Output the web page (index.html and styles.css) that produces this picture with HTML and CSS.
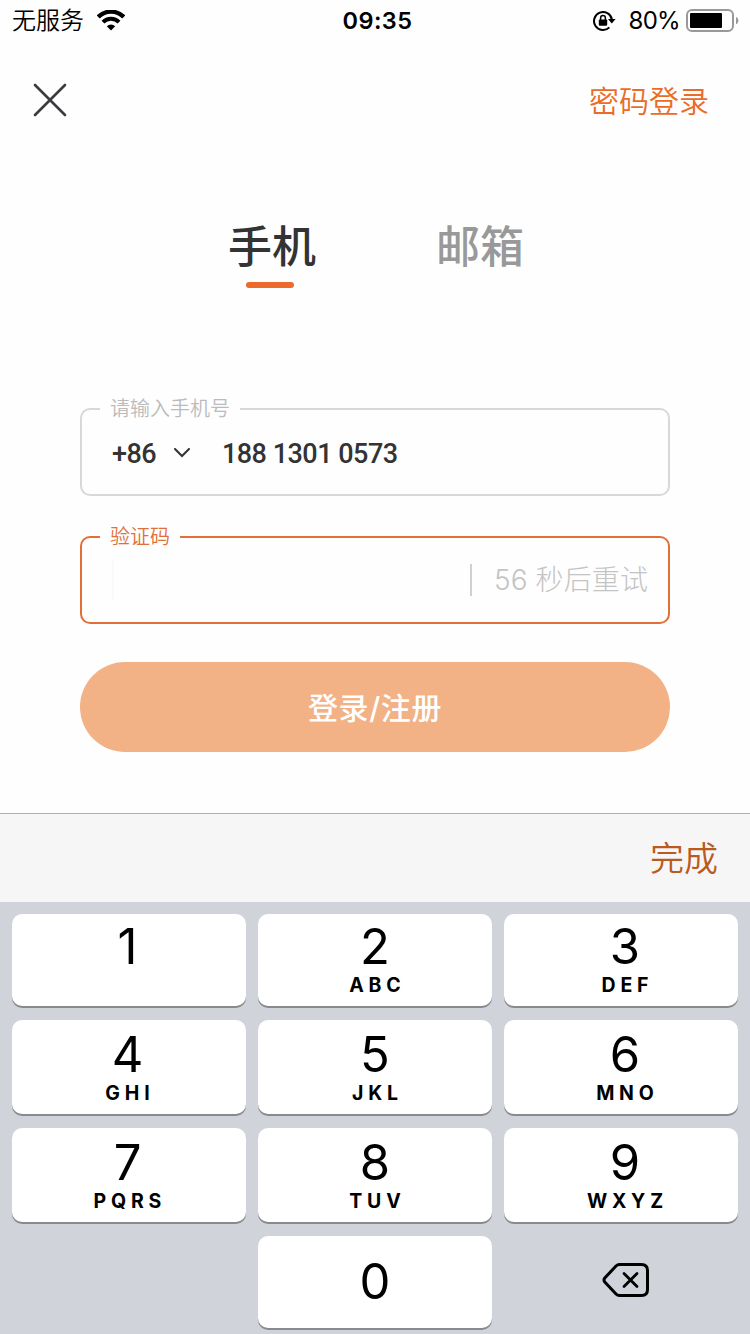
FILE: index.html
```html
<!DOCTYPE html>
<html lang="zh-CN">
<head>
    <meta charset="UTF-8">
    <meta name="viewport" content="width=device-width, initial-scale=1.0">
    <title>登录</title>
    <link rel="stylesheet" href="styles.css">
</head>
<body>

<div class="page">
    <!-- 状态栏 -->
    <header class="status-bar">
        <div class="status-left">
            <span class="carrier">无服务</span>
            <svg class="wifi" width="28" height="21" viewBox="0 0 28 21">
                <path d="M1.2 7A18 18 0 0 1 26.8 7" fill="none" stroke="#000" stroke-width="4.4"/>
                <path d="M6 12.2A11.2 11.2 0 0 1 22 12.2" fill="none" stroke="#000" stroke-width="4"/>
                <path d="M9.8 16.2A6 6 0 0 1 18.2 16.2L14 20.4Z"/>
            </svg>
        </div>
        <div class="status-time">09:35</div>
        <div class="status-right">
            <svg class="lock" width="24" height="22" viewBox="0 0 24 22">
                <path d="M17.4 17.4A9 9 0 1 1 19.9 9.5" fill="none" stroke="#000" stroke-width="2"/>
                <path d="M16 9h7.6l-3.8 4.6z"/>
                <rect x="6.8" y="9.6" width="8.4" height="6.2" rx="1"/>
                <path d="M8.6 10V8a2.4 2.6 0 0 1 4.8 0v2" fill="none" stroke="#000" stroke-width="1.5"/>
            </svg>
            <span class="percent">80%</span>
            <svg class="battery" width="54" height="24" viewBox="0 0 54 24">
                <rect x="1" y="1" width="46" height="21" rx="5" fill="none" stroke="#999" stroke-width="2"/>
                <rect x="4" y="4" width="32" height="15" rx="1"/>
                <path d="M50 8c3.2 1 3.2 6.2 0 7.2z" fill="#999"/>
            </svg>
        </div>
    </header>

    <!-- 导航 -->
    <nav class="nav">
        <button class="close-btn" aria-label="关闭">
            <svg width="34" height="34" viewBox="0 0 34 34">
                <path d="M2 2L32 32M32 2L2 32" stroke="#3c3c40" stroke-width="2.6" stroke-linecap="round"/>
            </svg>
        </button>
        <a class="password-login">密码登录</a>
    </nav>

    <div class="tabs">
        <div class="tab active">手机</div>
        <div class="tab">邮箱</div>
    </div>

    <!-- 登录表单 -->
    <main class="form">
        <fieldset class="field">
            <legend>请输入手机号</legend>
            <div class="field-row">
                <span class="area-code">+86</span>
                <svg class="arrow" width="18" height="12" viewBox="0 0 18 12">
                    <path d="M2 1l7 7 7-7" fill="none" stroke="#333" stroke-width="2" stroke-linecap="round"/>
                </svg>
                <span class="phone">188 1301 0573</span>
            </div>
        </fieldset>
        <fieldset class="field focused">
            <legend>验证码</legend>
            <div class="field-row code-row">
                <span class="caret"></span>
                <span class="countdown">56 秒后重试</span>
            </div>
        </fieldset>
        <button class="login-btn">登录/注册</button>
    </main>

    <!-- 键盘 -->
    <section class="keyboard">
        <div class="toolbar"><span class="done">完成</span></div>
        <div class="keys">
            <div class="key left"><b>1</b></div>
            <div class="key"><b>2</b><small>ABC</small></div>
            <div class="key right"><b>3</b><small>DEF</small></div>
            <div class="key low left"><b>4</b><small>GHI</small></div>
            <div class="key low"><b>5</b><small>JKL</small></div>
            <div class="key low right"><b>6</b><small>MNO</small></div>
            <div class="key low left"><b>7</b><small>PQRS</small></div>
            <div class="key low"><b>8</b><small>TUV</small></div>
            <div class="key low right"><b>9</b><small>WXYZ</small></div>
            <div class="key blank"></div>
            <div class="key zero"><b>0</b></div>
            <div class="key blank">
                <svg class="delete" width="48" height="36" viewBox="0 0 48 36">
                    <path d="M17.5 2.5H39.5Q45.5 2.5 45.5 8.5V27.5Q45.5 33.5 39.5 33.5H17.5Q15.5 33.5 14 32L2.8 20Q1.2 18 2.8 16L14 4Q15.5 2.5 17.5 2.5Z" fill="none" stroke="#000" stroke-width="3"/>
                    <path d="M22 11.5l13 13M35 11.5l-13 13" stroke="#000" stroke-width="2.8" stroke-linecap="round"/>
                </svg>
            </div>
        </div>
    </section>
</div>

</body>
</html>
```
FILE: styles.css
```css
* {
    box-sizing: border-box;
}
body {
    margin: 0;
    background-color: #fefefe;
    font-family: Inter, 'Noto Sans CJK SC', sans-serif;
    color: #000;
}
button {
    border: none;
    background: none;
    padding: 0;
    font-family: inherit;
}
.page {
    display: flex;
    flex-direction: column;
    width: 750px;
    height: 1334px;
    overflow: hidden;
}
.status-bar {
    display: grid;
    grid-template-columns: 1fr auto 1fr;
    align-items: center;
    height: 40px;
    padding: 0 10px 0 12px;
    font-size: 24px;
    line-height: 40px;
}
.status-left, .status-right {
    display: flex;
    align-items: center;
}
.status-left {
    gap: 13px;
}
.status-right {
    justify-content: flex-end;
}
.carrier {
    font-weight: 350;
    padding-top: 1px;
}
.status-time {
    padding: 1px 0 0 3px;
    font-size: 23.5px;
    font-weight: 600;
    letter-spacing: 0.4px;
}
.percent {
    margin: 1px 6px 0 13px;
    letter-spacing: -0.7px;
}
.nav {
    display: flex;
    justify-content: space-between;
    align-items: center;
    height: 120px;
    padding: 0 41px 0 33px;
}
.close-btn svg {
    display: block;
}
.password-login {
    padding-bottom: 2px;
    font-size: 30px;
    font-weight: 350;
    color: #e96c28;
}
.tabs {
    display: flex;
    justify-content: center;
    gap: 120px;
    height: 128px;
    padding: 55px 0 0 2px;
}
.tab {
    font-size: 44px;
    line-height: 64px;
    font-weight: 500;
    color: #999;
}
.tab.active {
    color: #333;
}
.tab.active::after {
    content: '';
    display: block;
    width: 48px;
    height: 6px;
    margin: 3px 0 0 18px;
    border-radius: 3px;
    background-color: #ec6a2c;
}
.form {
    display: flex;
    flex-direction: column;
    gap: 30px;
    height: 525px;
    padding: 110px 80px 0;
}
.field {
    height: 98px;
    margin: 0;
    padding: 0 18px;
    border: 2px solid #d8d8d8;
    border-radius: 10px;
}
.field legend {
    height: 22px;
    padding: 0 10px;
    font-size: 20px;
    line-height: 22px;
    font-weight: 350;
    color: #bbb;
}
.field.focused {
    border-color: #e07038;
}
.field.focused legend {
    color: #e07038;
}
.field-row {
    display: flex;
    align-items: center;
    height: 68px;
    padding-left: 12px;
    font-family: Roboto, sans-serif;
    font-size: 27px;
    font-weight: 500;
    color: #333;
}
.area-code {
    letter-spacing: -0.6px;
}
.arrow {
    margin: 0 31px 0 17px;
}
.phone {
    letter-spacing: -0.5px;
}
.code-row {
    justify-content: space-between;
    height: 64px;
    padding-right: 2px;
    font-family: Inter, 'Noto Sans CJK SC', sans-serif;
    font-weight: 300;
    font-size: 28px;
    color: #c4c4c4;
}
.caret {
    width: 2px;
    height: 40px;
    background-color: #fafafc;
}
.countdown {
    padding-left: 22px;
    border-left: 2px solid #d0d0d0;
    line-height: 32px;
    letter-spacing: 0.1px;
}
.login-btn {
    height: 90px;
    margin-top: 8px;
    padding-bottom: 3px;
    border-radius: 45px;
    background-color: #f3b186;
    color: #fff;
    font-size: 30px;
    font-weight: 450;
    letter-spacing: 0.6px;
}
.keyboard {
    height: 521px;
    background-color: #d1d3db;
}
.toolbar {
    display: flex;
    justify-content: flex-end;
    align-items: center;
    height: 89px;
    padding: 0 32px 3px 0;
    border-top: 1px solid #b0b0b0;
    background-color: #f6f6f6;
}
.done {
    font-size: 34px;
    font-weight: 350;
    color: #bb5a20;
}
.keys {
    display: grid;
    grid-template-columns: repeat(3, 234px);
    grid-template-rows: 92px 94px 94px 92px;
    gap: 14px 12px;
    padding: 12px 12px 0;
}
.key {
    display: flex;
    flex-direction: column;
    align-items: center;
    padding-top: 5px;
    border-radius: 10px;
    background-color: #fff;
    box-shadow: 0 2px 0 #898a8d;
}
.key.low {
    padding-top: 7px;
}
.key.left {
    padding-right: 3px;
}
.key.right {
    padding-left: 8px;
}
.key b {
    font-size: 49px;
    line-height: 56px;
    font-weight: 400;
}
.key small {
    font-size: 19.5px;
    line-height: 21px;
    font-weight: 650;
    letter-spacing: 4.8px;
    margin-right: -4.8px;
}
.key.zero {
    justify-content: center;
    padding: 0;
}
.key.blank {
    justify-content: center;
    padding: 0 0 4px 10px;
    background: none;
    box-shadow: none;
}
```
